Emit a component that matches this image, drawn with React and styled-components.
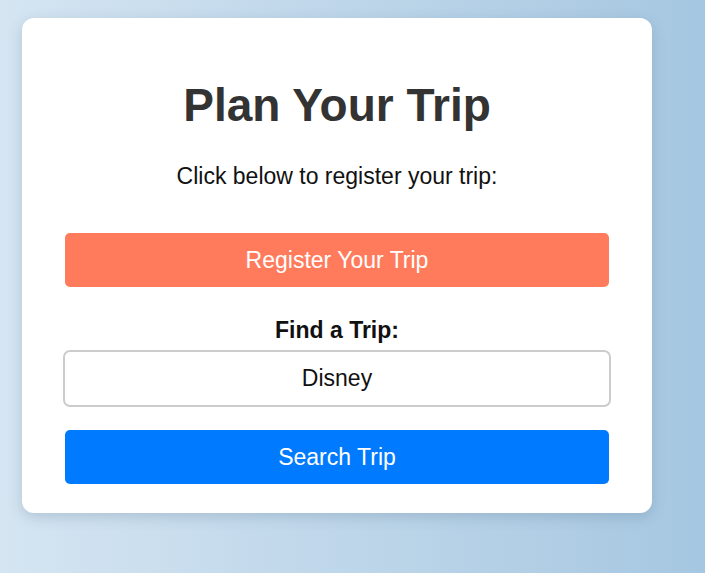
import React from "react";
import styled, { createGlobalStyle } from "styled-components";

const GlobalStyle = createGlobalStyle`
  html, body {
    margin: 0;
    min-height: 100%;
  }
  body {
    min-height: 573px;
    font-family: "Liberation Sans", Arial, sans-serif;
    background: linear-gradient(to right, #d5e5f2, #a6c7e1);
  }
`;

function App() {
  return (
    <>
      <GlobalStyle />
      <Page>
        <Card>
          <Title>Plan Your Trip</Title>
          <Subtitle>Click below to register your trip:</Subtitle>
          <Button color="#ff7b5c">Register Your Trip</Button>
          <Label htmlFor="trip">Find a Trip:</Label>
          <Input id="trip" defaultValue="Disney" />
          <Button color="#007bff">Search Trip</Button>
        </Card>
      </Page>
    </>
  );
}

export default App;

const Page = styled.div`
  padding: 18px 0 0 22px;
`;

const Card = styled.div`
  box-sizing: border-box;
  width: 630px;
  height: 495px;
  padding: 0 43px;
  background: #fff;
  border-radius: 12px;
  box-shadow: 0 4px 14px rgba(60, 90, 120, 0.22);
  display: flex;
  flex-direction: column;
  align-items: center;
`;

const Title = styled.h1`
  margin: 60px 0 0;
  font-size: 46px;
  font-weight: bold;
  color: #333;
  line-height: 54px;
`;

const Subtitle = styled.p`
  margin: 31px 0 0;
  font-size: 23px;
  color: #111;
  line-height: 26px;
`;

const Button = styled.button`
  width: 100%;
  height: 54px;
  margin-top: ${(p) => (p.color === "#007bff" ? "23px" : "44px")};
  border: none;
  border-radius: 5px;
  background: ${(p) => p.color};
  color: #fff;
  font-family: inherit;
  font-size: 23px;
`;

const Label = styled.label`
  margin-top: 30px;
  font-size: 23px;
  font-weight: bold;
  color: #111;
  line-height: 26px;
`;

const Input = styled.input`
  box-sizing: border-box;
  width: calc(100% + 4px);
  height: 57px;
  margin-top: 7px;
  border: 2px solid #ccc;
  border-radius: 7px;
  text-align: center;
  font-family: inherit;
  font-size: 23px;
  color: #111;
  outline: none;
`;
